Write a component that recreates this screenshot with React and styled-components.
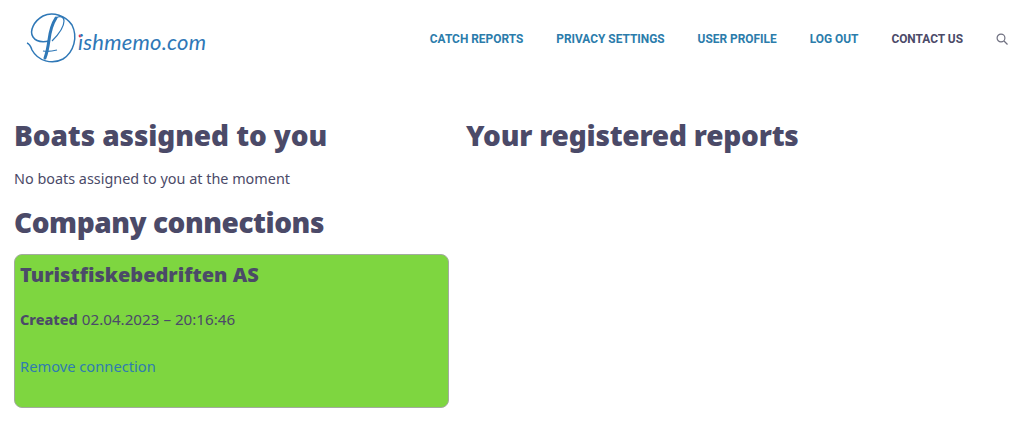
import React from "react";
import styled, { createGlobalStyle } from "styled-components";

const GlobalStyle = createGlobalStyle`
  html, body {
    margin: 0;
    background: #fff;
    font-family: "Noto Sans", "Open Sans", sans-serif;
    color: #4b4a68;
  }
`;

const Header = styled.header`
  display: flex;
  align-items: center;
  justify-content: space-between;
  height: 76px;
  padding: 0 16px 0 26px;
`;

const LogoMark = styled.svg`
  display: block;
  width: 182px;
  height: 56px;
`;

const Nav = styled.nav`
  display: flex;
  align-items: center;
  gap: 33px;
  padding-top: 2px;
`;

const NavLink = styled.a`
  font-family: "Roboto", sans-serif;
  font-size: 11.9px;
  font-weight: 700;
  white-space: nowrap;
  color: ${(p) => (p.$dark ? "#4b4a68" : "#2b7cab")};
`;

const SearchIcon = styled.svg`
  display: block;
  width: 12px;
  height: 12px;
  fill: none;
  stroke: #6f7080;
  stroke-width: 1.2;
`;

const Columns = styled.main`
  display: grid;
  grid-template-columns: 435px 1fr;
  gap: 17px;
  padding: 0 14px;
  margin-top: 42px;
`;

const Column = styled.section`
  display: flex;
  flex-direction: column;
`;

const Heading = styled.h2`
  margin: 0;
  font-size: 28px;
  line-height: 34px;
  font-weight: 900;
  letter-spacing: ${(p) => p.$tracking || "-0.2px"};
  color: #4b4a68;
`;

const Note = styled.p`
  margin: 16px 0 15px;
  font-size: 14.4px;
  line-height: 22px;
`;

const Card = styled.article`
  box-sizing: border-box;
  height: 154px;
  margin-top: 15px;
  padding: 6px 5px;
  background: #7ed640;
  border: 1px solid #a3ab9f;
  border-radius: 8px;
`;

const CardTitle = styled.h3`
  margin: 0;
  font-size: 20px;
  line-height: 28px;
  font-weight: 900;
`;

const Created = styled.p`
  margin: 19px 0 0;
  font-size: 15.2px;
  line-height: 22px;

  strong {
    font-size: 14.5px;
    font-weight: 800;
  }
`;

const RemoveLink = styled.a`
  display: block;
  margin-top: 25px;
  font-size: 14.7px;
  line-height: 22px;
  color: #2f7cb0;
`;

const App = () => {
  return (
    <>
      <GlobalStyle />
      <Header>
        <LogoMark viewBox="0 0 182 56" aria-label="Fishmemo.com logo">
          <g fill="none" stroke="#2f78b7">
            <path
              strokeWidth="1.5"
              d="M1 33c3 1 4 4 5 7 6 11 20 15 31 9 11-7 15-22 9-34C40 6 27 1 17 6 8 11 3 21 7 27c4 6 11 5 16 4"
            />
            <path strokeWidth="3" strokeLinecap="round" d="M30 8c-4 6-6 14-7 22-1 7-2 13-4 18" />
            <path strokeWidth="1.2" d="M30 8c4-3 8-1 8 3 0 7-7 15-12 20M17 41c5 1 10 0 14-1" />
          </g>
          <circle cx="54" cy="26" r="1.4" fill="#e2343f" />
          <text
            x="52"
            y="39.5"
            fontFamily="Lato, sans-serif"
            fontStyle="italic"
            fontSize="22"
            fill="#2f78b7"
            textLength="128"
            lengthAdjust="spacing"
          >
            ishmemo.com
          </text>
        </LogoMark>
        <Nav>
          <NavLink>CATCH REPORTS</NavLink>
          <NavLink>PRIVACY SETTINGS</NavLink>
          <NavLink>USER PROFILE</NavLink>
          <NavLink>LOG OUT</NavLink>
          <NavLink $dark>CONTACT US</NavLink>
          <SearchIcon viewBox="0 0 12 12" aria-label="Search">
            <circle cx="5" cy="5" r="3.9" />
            <path d="M8 8l3.5 3.5" />
          </SearchIcon>
        </Nav>
      </Header>
      <Columns>
        <Column>
          <Heading $tracking="-0.1px">Boats assigned to you</Heading>
          <Note>No boats assigned to you at the moment</Note>
          <Heading $tracking="-0.45px">Company connections</Heading>
          <Card>
            <CardTitle>Turistfiskebedriften AS</CardTitle>
            <Created>
              <strong>Created</strong> 02.04.2023 – 20:16:46
            </Created>
            <RemoveLink>Remove connection</RemoveLink>
          </Card>
        </Column>
        <Column>
          <Heading>Your registered reports</Heading>
        </Column>
      </Columns>
    </>
  );
};

export default App;
